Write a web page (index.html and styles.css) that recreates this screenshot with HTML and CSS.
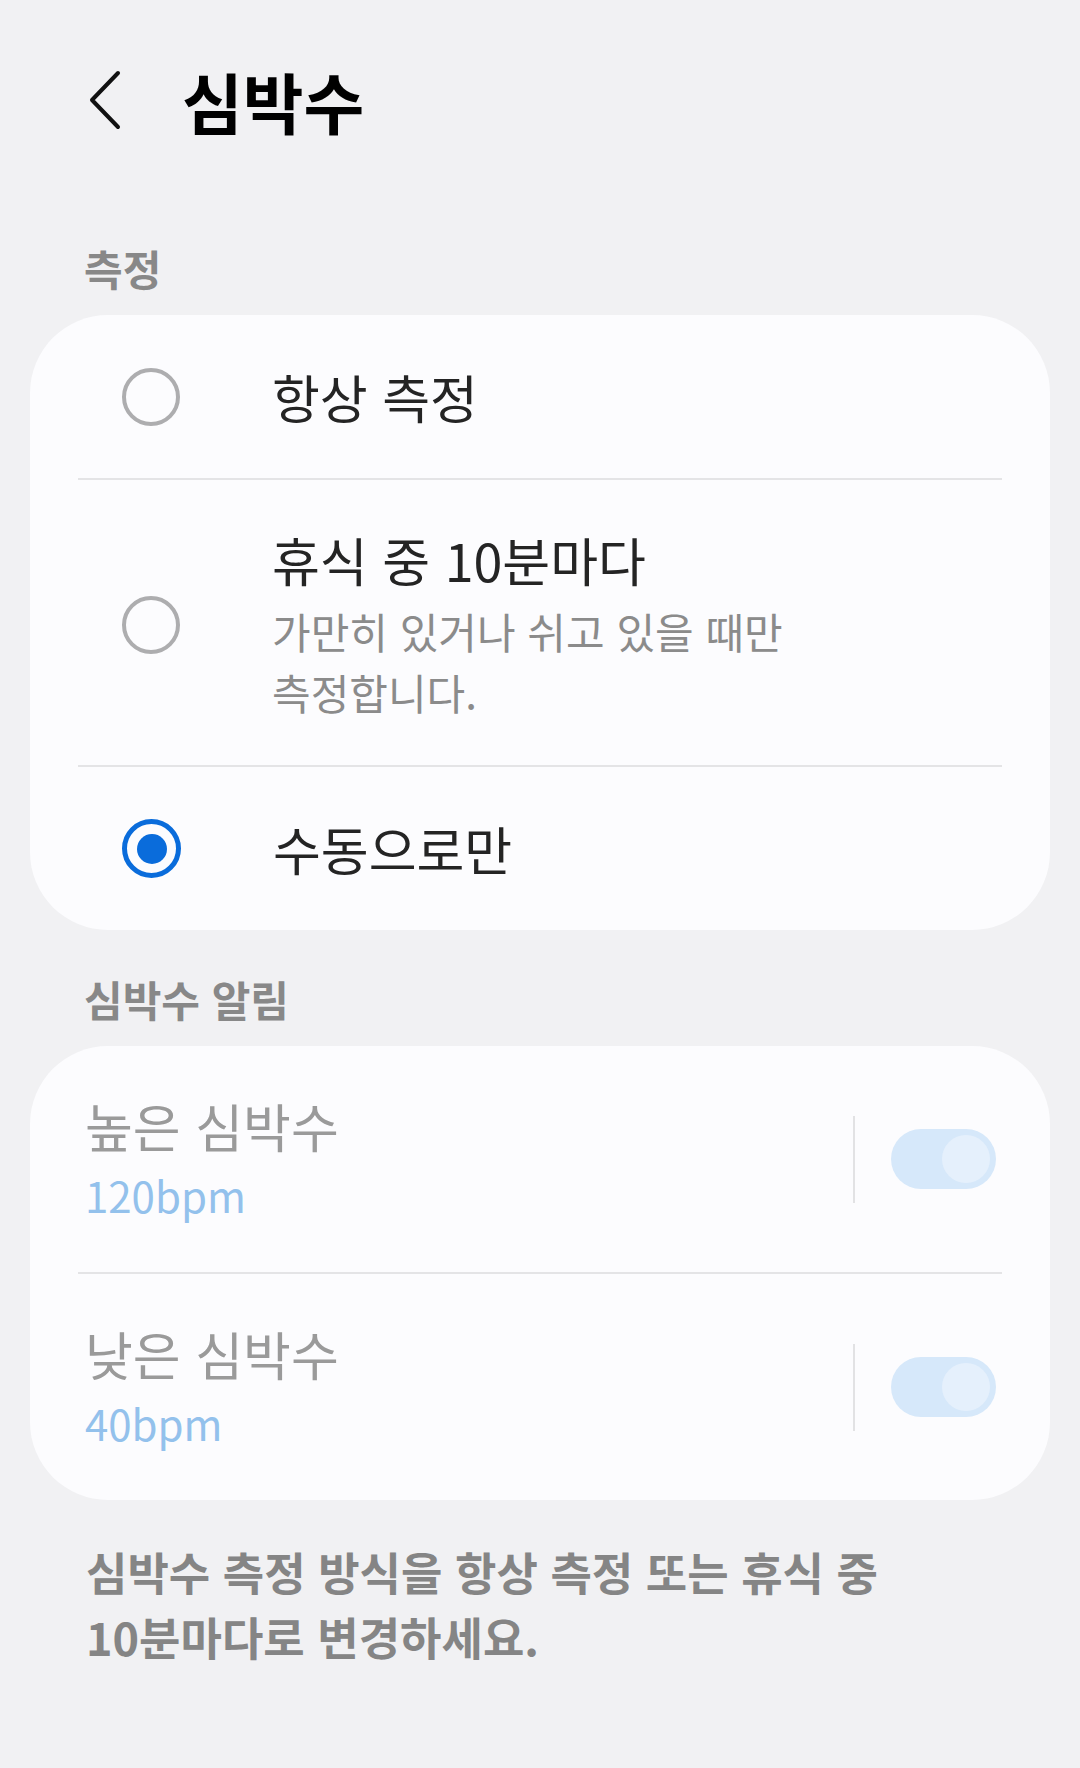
FILE: index.html
```html
<!DOCTYPE html>
<html lang="ko">
<head>
    <meta charset="UTF-8">
    <meta name="viewport" content="width=device-width, initial-scale=1.0">
    <title>심박수</title>
    <link rel="stylesheet" href="styles.css">
</head>
<body>
    <div class="screen">
        <header class="top-bar">
            <button class="back-btn" aria-label="뒤로">
                <svg width="34" height="60" viewBox="0 0 34 60">
                    <path d="M30 3 L4 30 L30 57" fill="none" stroke="#111" stroke-width="4" stroke-linecap="round" stroke-linejoin="round"/>
                </svg>
            </button>
            <h1 class="page-title">심박수</h1>
        </header>

        <!-- 측정 -->
        <h2 class="section-title">측정</h2>
        <div class="card">
            <div class="option">
                <span class="radio"></span>
                <div class="option-text">
                    <div class="option-title">항상 측정</div>
                </div>
            </div>
            <div class="option option-tall">
                <span class="radio"></span>
                <div class="option-text">
                    <div class="option-title">휴식 중 10분마다</div>
                    <div class="option-desc">가만히 있거나 쉬고 있을 때만<br>측정합니다.</div>
                </div>
            </div>
            <div class="option">
                <span class="radio checked"><span class="radio-dot"></span></span>
                <div class="option-text">
                    <div class="option-title">수동으로만</div>
                </div>
            </div>
        </div>

        <!-- 심박수 알림 -->
        <h2 class="section-title">심박수 알림</h2>
        <div class="card">
            <div class="switch-row">
                <div class="switch-text">
                    <div class="switch-title">높은 심박수</div>
                    <div class="switch-value">120bpm</div>
                </div>
                <span class="v-divider"></span>
                <span class="toggle"><span class="toggle-thumb"></span></span>
            </div>
            <div class="switch-row">
                <div class="switch-text">
                    <div class="switch-title">낮은 심박수</div>
                    <div class="switch-value">40bpm</div>
                </div>
                <span class="v-divider"></span>
                <span class="toggle"><span class="toggle-thumb"></span></span>
            </div>
        </div>

        <p class="footnote">심박수 측정 방식을 항상 측정 또는 휴식 중 10분마다로 변경하세요.</p>
    </div>
</body>
</html>
```

FILE: styles.css
```css
* {
    margin: 0;
    padding: 0;
    box-sizing: border-box;
}

body {
    font-family: "Noto Sans CJK KR", "Noto Sans", sans-serif;
    background-color: #f1f1f3;
    color: #242424;
    width: 1080px;
    height: 1768px;
    overflow: hidden;
    word-break: keep-all;
}

.top-bar {
    height: 199px;
    display: flex;
    align-items: center;
    padding-left: 88px;
}

.back-btn {
    border: none;
    background: none;
    display: flex;
    width: 34px;
    height: 60px;
}

.page-title {
    margin-left: 60px;
    font-size: 66px;
    font-weight: 700;
    color: #000;
    line-height: 80px;
}

.section-title {
    margin: 41px 0 19px;
    padding-left: 84px;
    font-size: 42px;
    line-height: 56px;
    font-weight: 700;
    color: #888888;
}

.card {
    margin: 0 30px;
    padding: 0 48px;
    background-color: #fcfcfe;
    border-radius: 78px;
}

/* radio rows */
.option {
    display: flex;
    align-items: center;
    min-height: 163px;
    padding-left: 44px;
}

.option + .option {
    min-height: 165px;
    border-top: 2px solid #e4e4e6;
}

.option-tall {
    padding-top: 48px;
    padding-bottom: 43px;
}

.radio {
    flex: none;
    width: 58px;
    height: 58px;
    border: 4px solid #adadaf;
    border-radius: 50%;
    display: flex;
    align-items: center;
    justify-content: center;
}

.radio.checked {
    width: 59px;
    height: 59px;
    border: 5px solid #0a6cdb;
}

.radio-dot {
    width: 30px;
    height: 30px;
    border-radius: 50%;
    background-color: #0a6cdb;
}

.option-text {
    margin-left: 92px;
}

.option-title {
    font-size: 52px;
    line-height: 64px;
    color: #242424;
}

.option-desc {
    margin-top: 8px;
    font-size: 42px;
    line-height: 61px;
    color: #8b8b8b;
}

/* switch rows */
.switch-row {
    display: flex;
    align-items: center;
    min-height: 226px;
    padding: 0 6px 0 7px;
}

.switch-row + .switch-row {
    min-height: 228px;
    border-top: 2px solid #e4e4e6;
}

.switch-text {
    flex: 1;
}

.switch-title {
    font-size: 52px;
    line-height: 64px;
    color: #9a9a9a;
}

.switch-value {
    margin-top: 7px;
    font-size: 42px;
    line-height: 60px;
    color: #93c1ec;
}

.v-divider {
    width: 2px;
    height: 87px;
    background-color: #e2e2e4;
    margin-right: 36px;
}

.toggle {
    width: 105px;
    height: 60px;
    border-radius: 30px;
    background-color: #d6e8fa;
    display: flex;
    justify-content: flex-end;
    align-items: center;
    padding-right: 6px;
}

.toggle-thumb {
    width: 48px;
    height: 48px;
    border-radius: 50%;
    background-color: #e5f0fc;
}

.footnote {
    margin-top: 39px;
    padding: 0 86px;
    font-size: 45px;
    line-height: 65px;
    font-weight: 700;
    color: #858585;
}
```
